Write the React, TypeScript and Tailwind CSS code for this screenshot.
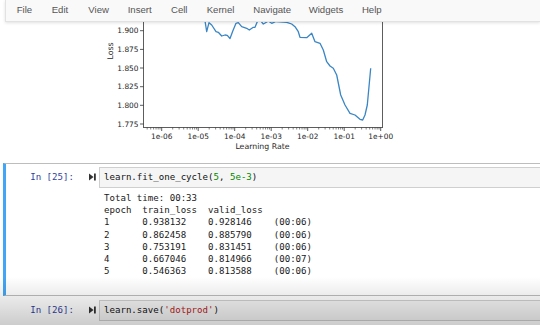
import React from 'react';

const menuItems: { label: string; w: string }[] = [
  { label: 'File', w: 'w-[35px]' },
  { label: 'Edit', w: 'w-[36.6px]' },
  { label: 'View', w: 'w-[39.4px]' },
  { label: 'Insert', w: 'w-[43.3px]' },
  { label: 'Cell', w: 'w-[35.7px]' },
  { label: 'Kernel', w: 'w-[46.6px]' },
  { label: 'Navigate', w: 'w-[55.4px]' },
  { label: 'Widgets', w: 'w-[53.3px]' },
  { label: 'Help', w: 'w-auto' },
];

// page coordinates of the lr_find curve (top part hides under the menu bar)
const curve: [number, number][] = [
  [203, 8], [206.7, 31.7], [209, 22.7], [211.7, 25], [216, 31.7], [218.3, 32.3], [221.7, 36],
  [225, 35], [227.3, 35.3], [230, 38.5], [232.7, 31.2], [236, 23.3], [238.3, 22.7],
  [241.7, 26.7], [246.7, 28.3], [249.3, 30], [253.3, 27.3], [255, 27.3], [257.3, 21.7],
  [260, 20], [263.3, 24], [266, 22.5], [268.3, 21], [271.7, 23.3], [276, 21.5], [286.7, 22.3],
  [291.7, 24], [295, 26.7], [298.3, 31.7], [300, 37.3], [306.7, 37.7], [311.7, 33.3],
  [315, 41.7], [320, 43.3], [323.3, 50], [326.7, 61.7], [330, 66], [333.3, 68.3],
  [336.7, 75], [340.7, 95], [345, 105], [350, 113.3], [355, 115], [360, 119.3],
  [362.7, 120], [365, 115], [367.3, 105], [370.7, 68.3],
];

const yTicks = [
  { label: '1.900', y: 30.7 },
  { label: '1.875', y: 49.4 },
  { label: '1.850', y: 68 },
  { label: '1.825', y: 86.7 },
  { label: '1.800', y: 105.3 },
  { label: '1.775', y: 124 },
];

const xLabels = ['1e-06', '1e-05', '1e-04', '1e-03', '1e-02', '1e-01', '1e+00'];
const X0 = 161.7;
const DEC = 36.5;

function LrChart() {
  const minors: number[] = [];
  for (let d = -1; d < 7; d++) {
    for (let m = 2; m <= 9; m++) {
      const x = X0 + (d + Math.log10(m)) * DEC;
      if (x > 143.5 && x < 382.5) minors.push(x);
    }
  }
  return (
    <svg width={540} height={141} viewBox="0 22 540 141" className="block">
      <g fontFamily="'DejaVu Sans', sans-serif" fill="#262626">
        {/* spines */}
        <line x1={143.5} y1={0} x2={143.5} y2={127.5} stroke="#333" strokeWidth={0.8} />
        <line x1={382.5} y1={0} x2={382.5} y2={127.5} stroke="#333" strokeWidth={0.8} />
        <line x1={143.1} y1={127.5} x2={382.9} y2={127.5} stroke="#333" strokeWidth={0.8} />

        {yTicks.map((t) => (
          <g key={t.label}>
            <line x1={140} y1={t.y} x2={143.5} y2={t.y} stroke="#333" strokeWidth={0.8} />
            <text x={138.5} y={t.y + 2.6} fontSize={7.4} textAnchor="end">{t.label}</text>
          </g>
        ))}

        {xLabels.map((l, i) => {
          const x = X0 + i * DEC;
          return (
            <g key={l}>
              <line x1={x} y1={127.5} x2={x} y2={131} stroke="#333" strokeWidth={0.8} />
              <text x={x} y={138.8} fontSize={7.4} textAnchor="middle">{l}</text>
            </g>
          );
        })}
        {minors.map((x, i) => (
          <line key={i} x1={x} y1={127.5} x2={x} y2={129.5} stroke="#333" strokeWidth={0.6} />
        ))}

        <text x={262.5} y={148.5} fontSize={7.8} textAnchor="middle">Learning Rate</text>
        <text x={0} y={0} fontSize={7.8} textAnchor="middle" transform="translate(113.3 51) rotate(-90)">Loss</text>

        <polyline
          points={curve.map((p) => p.join(',')).join(' ')}
          fill="none"
          stroke="#3a86c5"
          strokeWidth={1.3}
          strokeLinejoin="round"
        />
      </g>
    </svg>
  );
}

function RunIcon() {
  return (
    <svg width={7} height={8} viewBox="0 0 7 8" className="block">
      <path d="M0 0.5 L4.6 4 L0 7.5 Z" fill="#333" />
      <rect x={5} y={0.5} width={1.8} height={7} fill="#333" />
    </svg>
  );
}

function Prompt({ n }: { n: number }) {
  return (
    <div className="flex items-center shrink-0">
      <div className="w-[68px] text-right text-[#303f9f]">In [{n}]:</div>
      <div className="w-[25px] pl-[15px]">
        <RunIcon />
      </div>
    </div>
  );
}

const rows = [
  ['1', '0.938132', '0.928146', '(00:06)'],
  ['2', '0.862458', '0.885790', '(00:06)'],
  ['3', '0.753191', '0.831451', '(00:06)'],
  ['4', '0.667046', '0.814966', '(00:07)'],
  ['5', '0.546363', '0.813588', '(00:06)'],
];

export default function App() {
  const mono = "font-['DejaVu_Sans_Mono',monospace] text-[9.1px]";
  return (
    <div className="relative w-[540px] h-[325px] overflow-hidden bg-white">
      {/* menu bar */}
      <div className="relative z-10 h-[22px] ml-[5px] flex items-center pl-[10.7px] bg-[#f9f9f9] border-l border-b border-[#e2e2e2] shadow-[0_1px_3px_rgba(0,0,0,0.12)] font-['Liberation_Sans',Arial,sans-serif] text-[9.6px] text-[#555]">
        {menuItems.map((m) => (
          <div key={m.label} className={`${m.w} shrink-0`}>{m.label}</div>
        ))}
      </div>

      {/* output of previous cell: lr_find plot */}
      <div className="h-[141px]">
        <LrChart />
      </div>

      {/* selected cell */}
      <div className={`ml-[3px] w-[600px] h-[133px] border-t border-b border-[#bdbdbd] border-l-[3px] border-l-[#42a5f5] pt-[3px] ${mono}`}>
        <div className="flex items-center">
          <Prompt n={25} />
          <div className="flex-1 h-[21px] flex items-center pl-[4px] bg-[#f5f5f5] border border-[#cfcfcf] text-[#111]">
            <span>learn.fit_one_cycle(</span>
            <span className="text-[#080]">5</span>
            <span>,&nbsp;</span>
            <span className="text-[#080]">5e-3</span>
            <span>)</span>
          </div>
        </div>
        <div className="pl-[98px] pt-[4px] leading-[12.2px] text-[#1a1a1a] whitespace-pre">
          <div>Total time: 00:33</div>
          <div>epoch  train_loss  valid_loss</div>
          {rows.map((r) => (
            <div key={r[0]}>{`${r[0]}      ${r[1]}    ${r[2]}    ${r[3]}`}</div>
          ))}
        </div>
      </div>

      {/* next cell */}
      <div className={`ml-[3px] w-[600px] pt-[4px] border-l-[3px] border-transparent ${mono}`}>
        <div className="flex items-center">
          <Prompt n={26} />
          <div className="flex-1 h-[21px] flex items-center pl-[4px] bg-[#f5f5f5] border border-[#cfcfcf] text-[#111]">
            <span>learn.save(</span>
            <span className="text-[#ba2121]">'dotprod'</span>
            <span>)</span>
          </div>
        </div>
      </div>

      {/* darkening at the bottom of the frame */}
      <div className="pointer-events-none absolute inset-x-0 bottom-0 h-[48px] bg-gradient-to-b from-transparent to-black/20" />
    </div>
  );
}
